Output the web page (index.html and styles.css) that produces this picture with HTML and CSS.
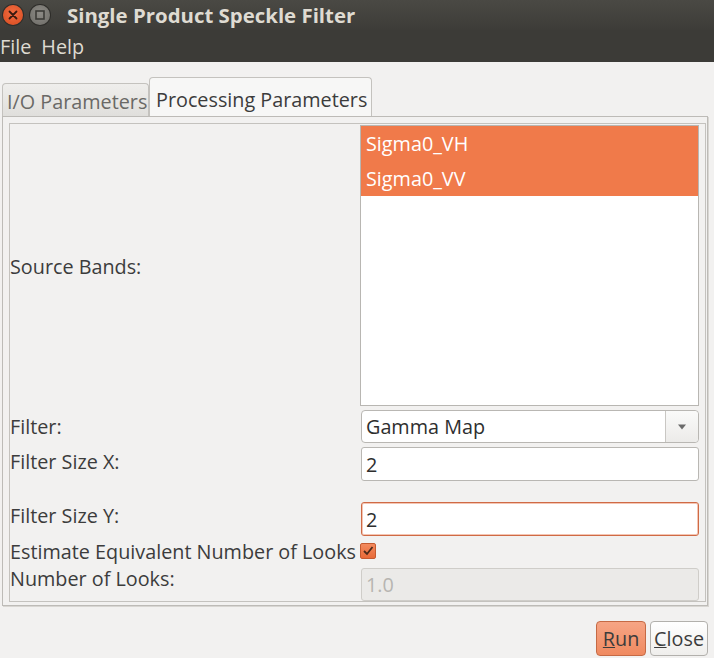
FILE: index.html
```html
<!DOCTYPE html>
<html>
<head>
<meta charset="utf-8">
<link rel="stylesheet" href="styles.css">
</head>
<body>
<div class="window">
  <div class="titlebar">
    <span class="wbtn close"><svg width="20" height="20" viewBox="0 0 20 20"><path d="M6.5 6.5 L13.5 13.5 M13.5 6.5 L6.5 13.5" stroke="#3a1a10" stroke-width="1.8" stroke-linecap="round"/></svg></span>
    <span class="wbtn max"><svg width="20" height="20" viewBox="0 0 20 20"><rect x="6" y="6" width="8" height="8" fill="none" stroke="#3c3b37" stroke-width="1.6"/></svg></span>
    <span class="title">Single Product Speckle Filter</span>
  </div>
  <div class="menubar"><span class="menu">File</span><span class="menu">Help</span></div>
  <div class="main">
    <div class="tabs">
      <div class="tab">I/O Parameters</div>
      <div class="tab active">Processing Parameters</div>
    </div>
    <div class="panel">
      <div class="inner">
        <div class="form">
          <div class="label lbl-bands">Source Bands:</div>
          <div class="listbox">
            <div class="item sel">Sigma0_VH</div>
            <div class="item sel">Sigma0_VV</div>
          </div>
          <div class="label lift-f">Filter:</div>
          <div class="combo"><span class="combo-text">Gamma Map</span><span class="combo-btn"><svg width="10" height="6" viewBox="0 0 10 6"><path d="M1 0.5 L9 0.5 L5 5.5 Z" fill="#6a6a6a"/></svg></span></div>
          <div class="label lift">Filter Size X:</div>
          <div class="input">2</div>
          <div class="label row-y lift-y">Filter Size Y:</div>
          <div class="input focused row-y">2</div>
          <div class="label check-row">Estimate Equivalent Number of Looks <span class="check"><svg width="14" height="14" viewBox="0 0 14 14"><path d="M3 7 L6 10 L11.5 3" fill="none" stroke="#4a2a1a" stroke-width="1.8"/></svg></span></div>
          <div class="label looks">Number of Looks:</div>
          <div class="input disabled">1.0</div>
        </div>
      </div>
    </div>
    <div class="buttons">
      <button class="btn run"><u>R</u>un</button>
      <button class="btn"><u>C</u>lose</button>
    </div>
  </div>
</div>
</body>
</html>
```
FILE: styles.css
```css
* { box-sizing: border-box; }
html, body { margin: 0; padding: 0; }
body {
  width: 714px; height: 658px; overflow: hidden;
  background: #f2f1f0;
  font-family: "Open Sans", "DejaVu Sans", sans-serif;
  font-size: 19.8px;
  color: #3c3c3c;
}
.titlebar {
  height: 30px;
  background: linear-gradient(#4a4944, #3d3c38);
  display: flex; align-items: center;
  padding-left: 3px;
}
.wbtn {
  width: 20px; height: 20px; border-radius: 50%;
  display: inline-flex; align-items: center; justify-content: center;
  margin-right: 7px;
}
.wbtn.close { background: radial-gradient(circle at 50% 40%, #f26d42, #d64a1e); box-shadow: 0 0 0 1px #2e2d2a; }
.wbtn.max { background: radial-gradient(circle at 50% 40%, #8d8b86, #6d6b66); box-shadow: 0 0 0 1px #2e2d2a; }
.title {
  color: #dfdbd2; font-weight: bold; font-size: 20.4px;
  margin-left: 10px;
}
.menubar {
  height: 32px; background: #3c3b37;
  display: flex; align-items: center;
  color: #dfdbd2;
}
.menu { margin-right: 10px; }
.main { padding: 15px 0 0 2px; }
.tabs { display: flex; height: 39px; align-items: flex-end; }
.tab {
  height: 33px; padding: 2px 3px 0 4px;
  border: 1px solid #c4c2be; border-bottom: none;
  border-radius: 4px 4px 0 0;
  background: linear-gradient(#efeeec, #e0dfdc);
  color: #6a6966;
  display: flex; align-items: center;
  width: 147px; white-space: nowrap; overflow: hidden;
}
.tab.active {
  height: 39px; width: 223px;
  background: #f7f7f6; color: #3c3c3c;
  padding-left: 6px; padding-top: 4px;
  border-color: #c4c2be;
}
.panel {
  width: 706px; height: 490px;
  border: 1px solid #bdbbb7;
  box-shadow: 1px 1px 0 #d8d6d2;
  padding: 6px 2px 4px 6px;
}
.inner {
  width: 697px; height: 479px;
  border: 1px solid #c4c2be;
  padding: 1px 5px 0 0;
}
.form {
  display: grid;
  grid-template-columns: 350px 339px;
  align-items: center;
}
.label { white-space: nowrap; }
.lbl-bands { margin-top: -3px; }
.lift-f { margin-top: -4px; }
.lift { margin-top: -6px; }
.listbox {
  height: 281px; background: #fff;
  border: 1px solid #b8b6b2;
  margin-bottom: 4px;
}
.item { height: 35px; line-height: 35px; padding-left: 5px; }
.item.sel { background: #f07a4a; color: #fff; }
.combo {
  height: 33px; margin-left: 1px;
  border: 1px solid #b9b7b3; border-radius: 4px;
  background: #fff;
  display: flex; align-items: stretch;
  margin-bottom: 4px;
}
.combo-text { flex: 1; display: flex; align-items: center; padding-left: 4px; color: #2e2e2e; }
.combo-btn {
  width: 33px; border-left: 1px solid #c9c7c3;
  background: linear-gradient(#fafaf9, #ecebe9);
  border-radius: 0 4px 4px 0;
  display: flex; align-items: center; justify-content: center;
}
.input {
  height: 34px; margin-left: 1px;
  border: 1px solid #b9b7b3; border-radius: 3px;
  background: #fff;
  display: flex; align-items: center; padding-left: 4px;
  color: #2e2e2e;
}
.input.row-y, .label.row-y { margin-top: 21px; }
.label.lift-y { margin-top: 13px; }
.input.focused { border-color: #cf6a45; box-shadow: inset 0 0 0 1px #f4c5b3; }
.input.disabled {
  background: #ebeae8; border-color: #cfcdc9; color: #b7b5b1;
  height: 33px;
  margin-top: 4px;
}
.check-row { grid-column: 1 / span 2; height: 26px; display: flex; align-items: center; margin-top: 2px; }
.check {
  display: inline-flex; width: 16px; height: 16px; margin-left: 4px;
  background: linear-gradient(#f38a5e, #e86a38);
  border: 1px solid #c45a30; border-radius: 2px;
  align-items: center; justify-content: center;
}
.looks { align-self: start; margin-top: 1px; }
.buttons {
  display: flex; justify-content: flex-end; gap: 4px;
  padding: 15px 6px 0 0;
}
.btn {
  height: 35px; font-family: inherit; font-size: 19.8px;
  border: 1px solid #b2b0ac; border-radius: 4px;
  background: linear-gradient(#ffffff, #efeeec);
  color: #3c3c3c; padding: 0 3px;
}
.btn.run {
  background: linear-gradient(#f6a585, #f08a60);
  border-color: #c56a45;
  width: 50px;
}
```
